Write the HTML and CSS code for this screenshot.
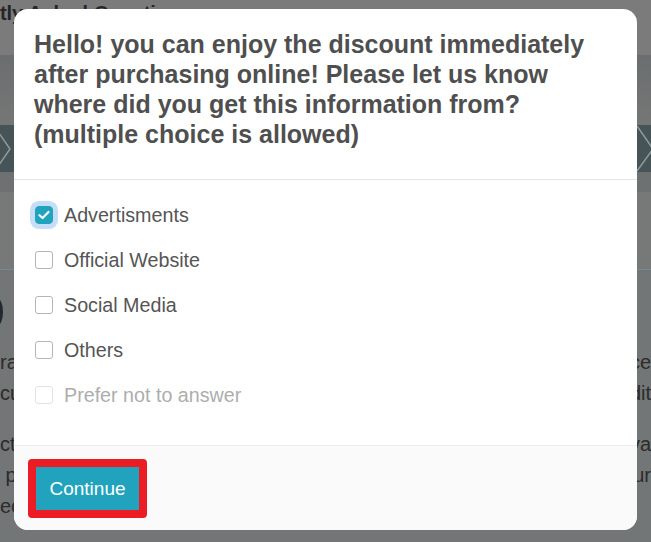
FILE: index.html
```html
<!DOCTYPE html>
<html lang="en">
<head>
<meta charset="utf-8">
<title>Survey</title>
<link rel="stylesheet" href="styles.css">
</head>
<body>
<div class="page">
  <header class="site-header"><h2 class="site-title">Frequently Asked Questions</h2></header>
  <div class="band band-a"></div>
  <div class="slider">
    <svg class="chev chev-left" width="14" height="47" viewBox="0 0 14 47"><path d="M-1 8 L10 24 L-1 40" fill="none" stroke="#8f9a9c" stroke-width="1.5"/></svg>
    <svg class="chev chev-right" width="14" height="47" viewBox="0 0 14 47"><path d="M0 1 L16 24 L0 46" fill="none" stroke="#8f9a9c" stroke-width="1.5"/></svg>
  </div>
  <div class="band band-b"></div>
  <div class="band band-c"></div>
  <div class="content">
    <div class="row row-icon"><span class="dot"></span></div>
    <div class="para">
      <div class="row"><span>ra</span><span>ce</span></div>
      <div class="row"><span>cu</span><span>dit</span></div>
    </div>
    <div class="para">
      <div class="row"><span>ct</span><span>va</span></div>
      <div class="row"><span>&nbsp;p</span><span>ur</span></div>
      <div class="row"><span>ec</span><span></span></div>
    </div>
  </div>
</div>

<div class="modal">
  <div class="modal-header">
    <h1 class="modal-title">Hello! you can enjoy the discount immediately after purchasing online! Please let us know where did you get this information from? (multiple choice is allowed)</h1>
  </div>
  <div class="modal-body">
    <label class="option">
      <span class="box box-checked"><svg width="12" height="10" viewBox="0 0 12 10"><path d="M1.5 5.2 L4.6 8 L10.5 2" fill="none" stroke="#fff" stroke-width="2.2" stroke-linecap="round" stroke-linejoin="round"/></svg></span>
      <span class="opt-text">Advertisments</span>
    </label>
    <label class="option">
      <span class="box"></span>
      <span class="opt-text">Official Website</span>
    </label>
    <label class="option">
      <span class="box"></span>
      <span class="opt-text">Social Media</span>
    </label>
    <label class="option">
      <span class="box"></span>
      <span class="opt-text">Others</span>
    </label>
    <label class="option option-disabled">
      <span class="box box-disabled"></span>
      <span class="opt-text">Prefer not to answer</span>
    </label>
  </div>
  <div class="modal-footer">
    <div class="highlight"><button class="btn">Continue</button></div>
  </div>
</div>
</body>
</html>
```

FILE: styles.css
```css
html, body {
  margin: 0;
  padding: 0;
}
body {
  width: 651px;
  height: 542px;
  overflow: hidden;
  position: relative;
  font-family: "Liberation Sans", Arial, sans-serif;
  background: #737676;
}
.page {
  display: flex;
  flex-direction: column;
  height: 542px;
}
.site-header {
  height: 56px;
  background: #7b7b7b;
  overflow: hidden;
}
.site-title {
  margin: 1px 0 0 -79px;
  font-size: 20px;
  line-height: 24px;
  font-weight: bold;
  color: #262626;
  white-space: nowrap;
}
.band-a {
  height: 72px;
  background: linear-gradient(#6b6e6e, #757777);
}
.slider {
  height: 47px;
  background: #465457;
  display: flex;
  justify-content: space-between;
}
.chev { display: block; }
.band-b {
  height: 20px;
  background: #6e7171;
}
.band-c {
  height: 79px;
  background: #777878;
  border-bottom: 1px solid #6f8a99;
}
.content {
  flex: 1;
  background: #737676;
  display: flex;
  flex-direction: column;
  padding-top: 29px;
  color: #2b2b2b;
  font-size: 20px;
}
.row {
  display: flex;
  justify-content: space-between;
  height: 31px;
  line-height: 31px;
  white-space: nowrap;
}
.row-icon {
  height: 28px;
  margin-bottom: 20px;
}
.dot {
  width: 10px;
  height: 26px;
  margin-left: -7px;
  border-radius: 50%;
  border: 3px solid #1f2a33;
  box-sizing: border-box;
}
.para {
  display: flex;
  flex-direction: column;
  margin-bottom: 20px;
}

/* modal */
.modal {
  position: absolute;
  left: 14px;
  top: 9px;
  width: 623px;
  height: 521px;
  background: #fff;
  border-radius: 14px;
  overflow: hidden;
  display: flex;
  flex-direction: column;
}
.modal-header {
  padding: 20px 20px 30px 20px;
  border-bottom: 1px solid #e3e3e3;
}
.modal-title {
  margin: 0;
  font-size: 25px;
  line-height: 30px;
  font-weight: bold;
  color: #4f4f4f;
}
.modal-body {
  padding: 20px 20px 35px 21px;
  display: flex;
  flex-direction: column;
  gap: 15px;
}
.option {
  display: flex;
  align-items: center;
  gap: 11px;
  height: 30px;
  font-size: 19.7px;
  color: #555;
}
.box {
  width: 18px;
  height: 18px;
  box-sizing: border-box;
  border: 1px solid #b5b5b5;
  border-radius: 3px;
  background: #fff;
  display: flex;
  align-items: center;
  justify-content: center;
}
.box-checked {
  background: #22a3bd;
  border-color: #22a3bd;
  box-shadow: 0 0 0 5px #c6ddf8;
  border-radius: 4px;
}
.box-disabled {
  border-color: #e2e2e2;
}
.option-disabled {
  color: #adadad;
}
.modal-footer {
  flex: 1;
  background: #fafafa;
  border-top: 1px solid #ededed;
  padding: 13px 14px;
}
.highlight {
  display: inline-block;
  border: 8px solid #ec1c24;
  border-radius: 4px;
}
.btn {
  display: block;
  width: 103px;
  height: 43px;
  border: 0;
  margin: 0;
  padding: 0;
  background: #22a3bd;
  color: #fff;
  font-family: "Liberation Sans", Arial, sans-serif;
  font-size: 19px;
}
```
